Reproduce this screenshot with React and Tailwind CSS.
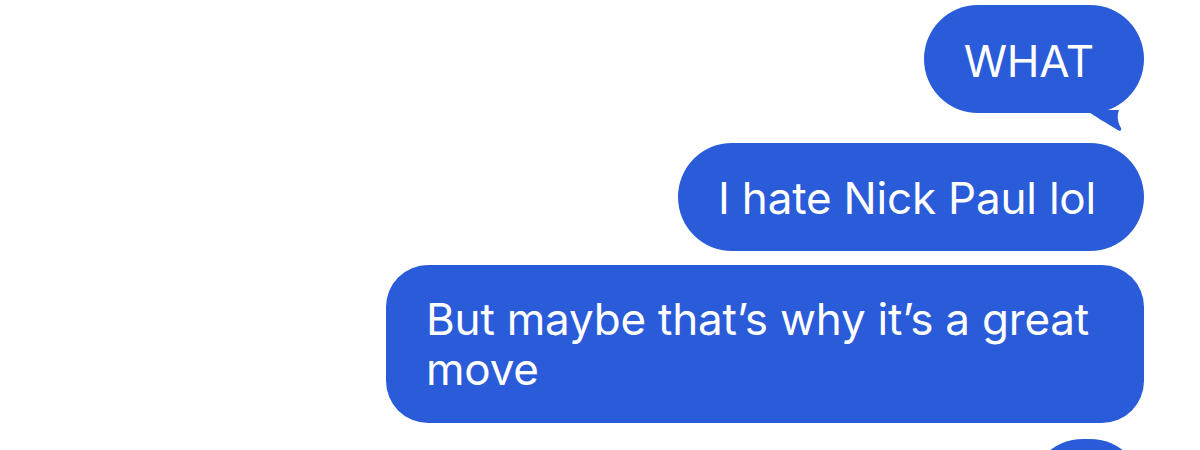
import React from 'react';

const font = { fontFamily: 'Inter, "Noto Sans", sans-serif' };

function Bubble({ children, tail, className = '' }) {
  return (
    <div className={`relative bg-[#2a5bd8] text-white text-[44px] leading-[50px] tracking-[-0.2px] ${className}`}>
      {children}
      {tail && (
        <svg
          className="absolute"
          style={{ right: 18, bottom: -21 }}
          width="40"
          height="24"
          viewBox="0 0 40 24"
        >
          <path
            d="M0 0 C8 6 22 14 30 19 C34 22 36 21 35 18 C33 14 30 8 33 0 Z"
            fill="#2a5bd8"
          />
        </svg>
      )}
    </div>
  );
}

export default function App() {
  return (
    <div className="w-[1200px] h-[450px] overflow-hidden bg-white" style={font}>
      <div className="flex flex-col items-end pr-[56px] pt-[5px]">
        <Bubble tail className="h-[108px] pl-[40px] pr-[50px] flex items-center rounded-[54px]">
          <span className="mt-[4px]">WHAT</span>
        </Bubble>
        <Bubble className="mt-[30px] h-[108px] pl-[40px] pr-[48px] flex items-center rounded-[54px]">
          <span className="mt-[2px]">I hate Nick Paul lol</span>
        </Bubble>
        <Bubble className="mt-[14px] w-[758px] pl-[40px] pr-[40px] py-[29px] rounded-[42px]">
          But maybe that’s why it’s a great move
        </Bubble>
        <Bubble className="mt-[16px] w-[115px] h-[108px] rounded-[54px]" />
      </div>
    </div>
  );
}
